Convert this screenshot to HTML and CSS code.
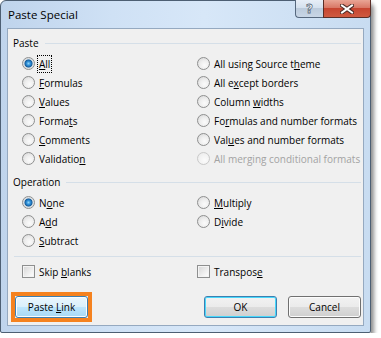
FILE: index.html
```html
<!DOCTYPE html>
<html lang="en">
<head>
    <meta charset="UTF-8">
    <title>Paste Special</title>
    <link rel="stylesheet" href="styles.css">
</head>
<body>

<div class="window">
    <!-- title bar -->
    <div class="titlebar">
        <span class="title">Paste Special</span>
        <div class="caption-buttons">
            <span class="cap-btn help">?</span>
            <span class="cap-btn close">
                <svg width="14" height="10" viewBox="0 0 14 10">
                    <path d="M2 1.5 L12 8.5 M12 1.5 L2 8.5" stroke="#4b2a24" stroke-width="4" stroke-linecap="square"/>
                    <path d="M2 1.5 L12 8.5 M12 1.5 L2 8.5" stroke="#ffffff" stroke-width="2" stroke-linecap="square"/>
                </svg>
            </span>
        </div>
    </div>

    <div class="client">
        <!-- Paste -->
        <div class="group-head"><span>Paste</span></div>
        <div class="options">
            <label class="opt"><span class="radio on"></span><span class="focus"><u>A</u>ll</span></label>
            <label class="opt"><span class="radio"></span><span>All using Source t<u>h</u>eme</span></label>
            <label class="opt"><span class="radio"></span><span><u>F</u>ormulas</span></label>
            <label class="opt"><span class="radio"></span><span>All e<u>x</u>cept borders</span></label>
            <label class="opt"><span class="radio"></span><span><u>V</u>alues</span></label>
            <label class="opt"><span class="radio"></span><span>Column <u>w</u>idths</span></label>
            <label class="opt"><span class="radio"></span><span>Forma<u>t</u>s</span></label>
            <label class="opt"><span class="radio"></span><span>Fo<u>r</u>mulas and number formats</span></label>
            <label class="opt"><span class="radio"></span><span><u>C</u>omments</span></label>
            <label class="opt"><span class="radio"></span><span>Val<u>u</u>es and number formats</span></label>
            <label class="opt"><span class="radio"></span><span>Validatio<u>n</u></span></label>
            <label class="opt disabled"><span class="radio"></span><span>All mergin<u>g</u> conditional formats</span></label>
        </div>

        <!-- Operation -->
        <div class="group-head op-head"><span>Operation</span></div>
        <div class="options">
            <label class="opt"><span class="radio on"></span><span>N<u>o</u>ne</span></label>
            <label class="opt"><span class="radio"></span><span><u>M</u>ultiply</span></label>
            <label class="opt"><span class="radio"></span><span>A<u>d</u>d</span></label>
            <label class="opt"><span class="radio"></span><span>D<u>i</u>vide</span></label>
            <label class="opt"><span class="radio"></span><span><u>S</u>ubtract</span></label>
        </div>

        <div class="separator"></div>

        <div class="options checks">
            <label class="opt"><span class="check"></span><span>Skip <u>b</u>lanks</span></label>
            <label class="opt"><span class="check"></span><span>Transpos<u>e</u></span></label>
        </div>

        <div class="button-row">
            <span class="highlight"><button class="btn hot">Paste <u>L</u>ink</button></span>
            <div class="right-buttons">
                <button class="btn default">OK</button>
                <button class="btn">Cancel</button>
            </div>
        </div>
    </div>
</div>

</body>
</html>
```

FILE: styles.css
```css
body {
    margin: 0;
    padding: 0;
    background: #ffffff;
    font-family: "Open Sans", sans-serif;
    font-size: 10px;
    color: #000000;
}

.window {
    width: 369px;
    height: 331px;
    border: 1px solid #4d5f73;
    border-radius: 6px 6px 2px 2px;
    background: linear-gradient(90deg, #bfd4ec 0%, #cfe1f5 30%, #d7e7f8 55%, #c8dcf1 100%);
    box-shadow: 3px 3px 4px rgba(0, 0, 0, 0.45);
    display: flex;
    flex-direction: column;
}

/* title bar */
.titlebar {
    height: 27px;
    display: flex;
    justify-content: space-between;
    align-items: flex-start;
    padding-left: 7px;
}

.title {
    font-size: 11.5px;
    margin-top: 6px;
    color: #000000;
}

.caption-buttons {
    display: flex;
    margin-top: -1px;
    margin-right: -1px;
}

.cap-btn {
    height: 18px;
    display: flex;
    align-items: center;
    justify-content: center;
    box-sizing: border-box;
    border: 1px solid #56687e;
    border-top: none;
}

.help {
    width: 28px;
    border-right: none;
    border-radius: 0 0 0 4px;
    background: linear-gradient(180deg, #e7eef7 0%, #d5e1ee 45%, #bccbdc 50%, #c8d6e6 100%);
    color: #ffffff;
    font-family: "DejaVu Sans", sans-serif;
    font-weight: bold;
    font-size: 12px;
    -webkit-text-stroke: 0.8px #5d6b7b;
}

.close {
    width: 48px;
    border-radius: 0 0 4px 0;
    border-color: #5a2e27;
    background: linear-gradient(180deg, #e9a595 0%, #d97866 45%, #c74530 50%, #cf5a40 100%);
}

/* client area */
.client {
    flex: 1;
    margin: 0 6px 6px 6px;
    border: 1px solid #95a9c0;
    background: #f0f0f0;
    padding: 7px 2px 0 5px;
}

.group-head {
    display: flex;
    align-items: center;
    gap: 6px;
    height: 14px;
}

.group-head::after {
    content: "";
    flex: 1;
    height: 1px;
    background: #d5dfe8;
}

.op-head {
    margin-top: 7px;
}

.options {
    display: grid;
    grid-template-columns: 175px 1fr;
    margin-top: 4px;
    padding-left: 9px;
}

.opt {
    display: flex;
    align-items: center;
    gap: 4px;
    height: 19px;
    white-space: nowrap;
}

.opt u, .btn u {
    text-decoration-thickness: 1px;
    text-underline-offset: 1px;
}

.radio {
    width: 13px;
    height: 13px;
    box-sizing: border-box;
    border-radius: 50%;
    border: 1px solid #8e8f8f;
    background: radial-gradient(circle at 60% 65%, #fbfbfb 0%, #eeeeee 45%, #d4d4d4 100%);
    flex: none;
}

.radio.on {
    background: radial-gradient(circle at 50% 50%, #8fd4f7 0px, #2f8fd8 2px, #175f9e 3.6px, #cfd6dc 4.4px, #eeeeee 6px);
}

.disabled {
    color: #a3a3a3;
}

.disabled u {
    text-decoration: none;
}

.disabled .radio {
    border-color: #c9c9c9;
    background: radial-gradient(circle at 60% 65%, #fbfbfb 0%, #f1f1f1 60%, #e6e6e6 100%);
}

.focus {
    outline: 1px dotted #000000;
    outline-offset: 1px;
}

.separator {
    height: 1px;
    background: #d5dfe8;
    margin: 6px 0 0 1px;
}

.checks {
    margin-top: 5px;
}

.check {
    width: 13px;
    height: 13px;
    box-sizing: border-box;
    border: 1px solid #8e8f8f;
    background: linear-gradient(135deg, #d5d5d5 0%, #f4f4f4 70%, #ffffff 100%);
    box-shadow: inset 0 0 0 1px #f4f4f4;
    flex: none;
}

/* buttons */
.button-row {
    display: flex;
    justify-content: space-between;
    align-items: flex-start;
    margin-top: 11px;
    padding-left: 0;
}

.highlight {
    display: flex;
    border: 4px solid #f5821f;
    margin-left: -2px;
}

.right-buttons {
    display: flex;
    gap: 11px;
    margin-top: 4px;
}

.btn {
    width: 73px;
    height: 22px;
    box-sizing: border-box;
    font-family: "Open Sans", sans-serif;
    font-size: 10px;
    color: #000000;
    border: 1px solid #707070;
    border-radius: 3px;
    box-shadow: inset 0 0 0 1px #fcfcfc;
    background: linear-gradient(180deg, #f2f2f2 0%, #ebebeb 50%, #dddddd 50%, #cfcfcf 100%);
    padding: 0;
}

.btn.default {
    border-color: #3c7fb1;
    box-shadow: inset 0 0 0 1px #48d8fb;
}

.btn.hot {
    border-color: #3c7fb1;
    background: linear-gradient(180deg, #eaf6fd 0%, #d9f0fc 50%, #bee6fd 50%, #a7d9f5 100%);
}
```
